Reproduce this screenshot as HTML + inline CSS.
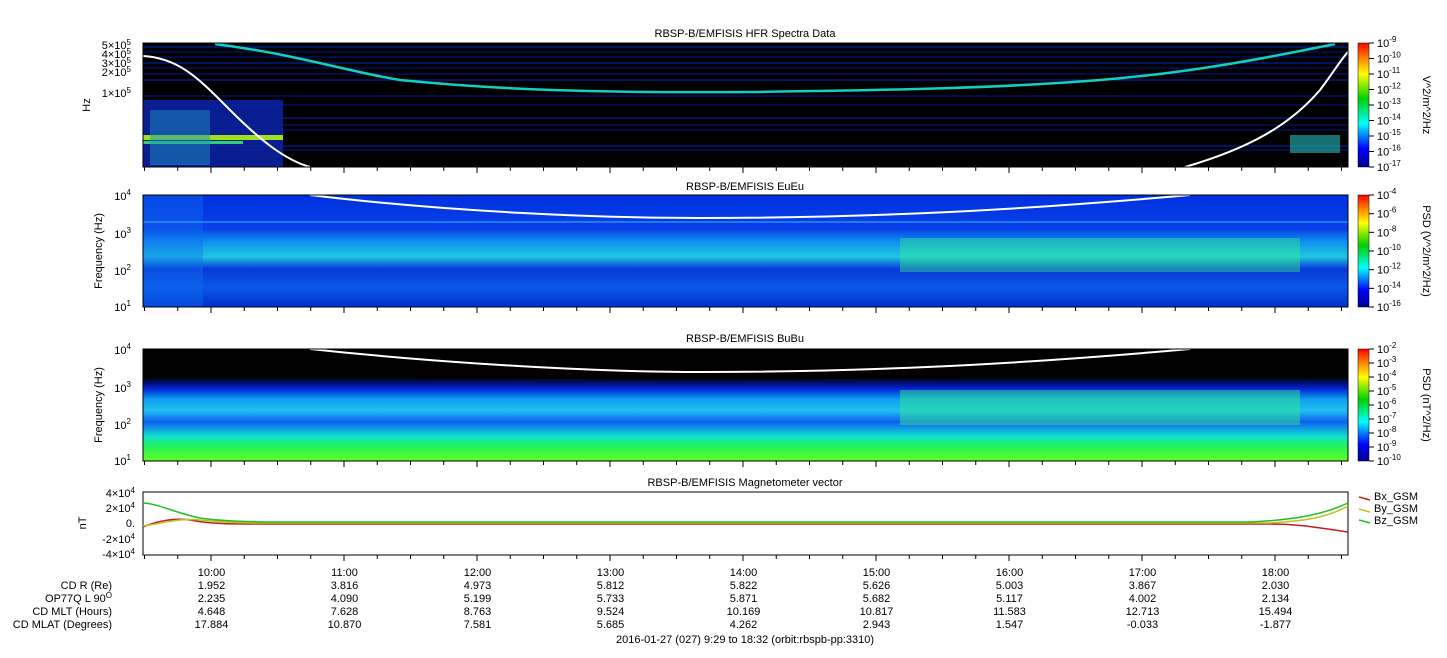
<!DOCTYPE html>
<html><head><meta charset="utf-8"><style>
html,body{margin:0;padding:0;background:#fff;width:1447px;height:658px;overflow:hidden}
svg{display:block;font-family:"Liberation Sans",sans-serif}
text{fill:#000;font-size:11px}
</style></head><body>
<svg id="s" width="1447" height="658" viewBox="0 0 1447 658">
<defs>
<linearGradient id="cb" x1="0" y1="1" x2="0" y2="0">
<stop offset="0" stop-color="#00008c"/><stop offset="0.15" stop-color="#0000ff"/><stop offset="0.35" stop-color="#00ffff"/><stop offset="0.55" stop-color="#00d000"/><stop offset="0.75" stop-color="#ffff00"/><stop offset="0.88" stop-color="#ff8000"/><stop offset="1" stop-color="#ff0000"/>
</linearGradient>
<linearGradient id="p2" x1="0" y1="0" x2="0" y2="1">
<stop offset="0" stop-color="#0030e0"/><stop offset="0.3" stop-color="#0840e8"/><stop offset="0.42" stop-color="#1090f0"/><stop offset="0.55" stop-color="#20c8e0"/><stop offset="0.66" stop-color="#0838d8"/><stop offset="0.82" stop-color="#0a58e8"/><stop offset="1" stop-color="#0030d0"/>
</linearGradient>
<linearGradient id="p3" x1="0" y1="0" x2="0" y2="1">
<stop offset="0" stop-color="#000"/><stop offset="0.25" stop-color="#000"/><stop offset="0.35" stop-color="#0020d0"/><stop offset="0.45" stop-color="#10a0f0"/><stop offset="0.55" stop-color="#20c0f0"/><stop offset="0.65" stop-color="#1060f0"/><stop offset="0.78" stop-color="#10e0d0"/><stop offset="0.86" stop-color="#20f060"/><stop offset="1" stop-color="#60ff20"/>
</linearGradient>
</defs>
<!-- Panel 1 -->
<text x="745" y="37" text-anchor="middle">RBSP-B/EMFISIS  HFR Spectra Data</text>
<rect x="143" y="43" width="1205" height="124" fill="#000"/>
<g id="p1lines"></g>
<rect x="143" y="100" width="140" height="67" fill="#0a20a0" opacity="0.9"/>
<rect x="143" y="135" width="140" height="5" fill="#a0e020"/>
<rect x="143" y="141" width="100" height="3" fill="#30d070"/>
<rect x="150" y="110" width="60" height="55" fill="#2090c0" opacity="0.5"/>
<rect x="1290" y="135" width="50" height="18" fill="#20a0a0" opacity="0.7"/>
<path d="M215,44 C300,55 340,70 400,80 C500,90 600,93 750,92 C900,90 1000,88 1100,80 C1200,72 1280,55 1335,44" stroke="#10d0c0" stroke-width="2.5" fill="none"/>
<path d="M143,56 C180,58 200,80 230,110 C260,140 285,160 310,167" stroke="#fff" stroke-width="2" fill="none"/>
<path d="M1185,167 C1250,148 1290,125 1320,90 C1335,70 1342,58 1348,52" stroke="#fff" stroke-width="2" fill="none"/>
<rect x="143" y="43" width="1205" height="124" fill="none" stroke="#000"/>
<text x="131" y="49" text-anchor="end" font-size="10">5×10<tspan dy="-4" font-size="8">5</tspan></text>
<text x="131" y="58" text-anchor="end" font-size="10">4×10<tspan dy="-4" font-size="8">5</tspan></text>
<text x="131" y="67" text-anchor="end" font-size="10">3×10<tspan dy="-4" font-size="8">5</tspan></text>
<text x="131" y="76" text-anchor="end" font-size="10">2×10<tspan dy="-4" font-size="8">5</tspan></text>
<text x="131" y="97" text-anchor="end" font-size="10">1×10<tspan dy="-4" font-size="8">5</tspan></text>
<text transform="translate(90,105) rotate(-90)" text-anchor="middle">Hz</text>
<rect x="1358" y="43" width="11" height="124" fill="url(#cb)" stroke="#000" stroke-width="0.5"/>
<text transform="translate(1423,105) rotate(90)" text-anchor="middle">V^2/m^2/Hz</text>
<!-- Panel 2 -->
<text x="745" y="190" text-anchor="middle">RBSP-B/EMFISIS  EuEu</text>
<rect x="143" y="195" width="1205" height="112" fill="url(#p2)"/>
<rect x="900" y="238" width="400" height="34" fill="#30e890" opacity="0.45"/>
<rect x="143" y="195" width="60" height="112" fill="#1070f0" opacity="0.4"/>
<line x1="143" y1="222" x2="1348" y2="222" stroke="#30a0f0" stroke-width="1.2"/>
<path d="M310,195 C450,212 600,218 700,218 C850,218 1000,212 1190,195" stroke="#fff" stroke-width="2" fill="none"/>
<rect x="143" y="195" width="1205" height="112" fill="none" stroke="#000"/>
<text x="131" y="311" text-anchor="end">10<tspan dy="-5" font-size="8">1</tspan></text>
<text x="131" y="275" text-anchor="end">10<tspan dy="-5" font-size="8">2</tspan></text>
<text x="131" y="238" text-anchor="end">10<tspan dy="-5" font-size="8">3</tspan></text>
<text x="131" y="200" text-anchor="end">10<tspan dy="-5" font-size="8">4</tspan></text>
<text transform="translate(102,251) rotate(-90)" text-anchor="middle">Frequency (Hz)</text>
<rect x="1358" y="195" width="11" height="112" fill="url(#cb)" stroke="#000" stroke-width="0.5"/>
<text transform="translate(1423,251) rotate(90)" text-anchor="middle">PSD (V^2/m^2/Hz)</text>
<!-- Panel 3 -->
<text x="745" y="342" text-anchor="middle">RBSP-B/EMFISIS  BuBu</text>
<rect x="143" y="349" width="1205" height="112" fill="url(#p3)"/>
<rect x="900" y="390" width="400" height="35" fill="#30e890" opacity="0.5"/>
<path d="M143,349 L1348,349 L1348,365 C1100,375 800,388 143,372 Z" fill="#000"/>
<path d="M310,349 C450,364 600,372 700,372 C850,372 1000,366 1190,349" stroke="#fff" stroke-width="2" fill="none"/>
<rect x="143" y="349" width="1205" height="112" fill="none" stroke="#000"/>
<text x="131" y="465" text-anchor="end">10<tspan dy="-5" font-size="8">1</tspan></text>
<text x="131" y="429" text-anchor="end">10<tspan dy="-5" font-size="8">2</tspan></text>
<text x="131" y="392" text-anchor="end">10<tspan dy="-5" font-size="8">3</tspan></text>
<text x="131" y="354" text-anchor="end">10<tspan dy="-5" font-size="8">4</tspan></text>
<text transform="translate(102,405) rotate(-90)" text-anchor="middle">Frequency (Hz)</text>
<rect x="1358" y="349" width="11" height="112" fill="url(#cb)" stroke="#000" stroke-width="0.5"/>
<text transform="translate(1423,405) rotate(90)" text-anchor="middle">PSD (nT^2/Hz)</text>
<g id="cbl"></g>
<!-- Panel 4 -->
<text x="745" y="486" text-anchor="middle">RBSP-B/EMFISIS  Magnetometer vector</text>
<rect x="143" y="492" width="1205" height="63" fill="#fff" stroke="#000"/>
<path d="M143,527 C160,520 175,518 190,520 C210,524 230,524 260,524 L1270,524 C1300,524 1320,528 1348,532" stroke="#c02020" stroke-width="1.5" fill="none"/>
<path d="M143,526 C170,522 180,518 200,520 C220,522 240,523 260,523 L1270,523 C1300,521 1325,519 1348,506" stroke="#c0c020" stroke-width="1.5" fill="none"/>
<path d="M143,503 C160,504 175,513 200,518 C220,521 250,522 280,522 L1250,522 C1290,520 1320,516 1348,503" stroke="#20c020" stroke-width="1.5" fill="none"/>
<text x="135" y="497" text-anchor="end" font-size="10">4×10<tspan dy="-4" font-size="8">4</tspan></text>
<text x="135" y="512" text-anchor="end" font-size="10">2×10<tspan dy="-4" font-size="8">4</tspan></text>
<text x="135" y="527" text-anchor="end" font-size="10">0.</text>
<text x="135" y="543" text-anchor="end" font-size="10">-2×10<tspan dy="-4" font-size="8">4</tspan></text>
<text x="135" y="558" text-anchor="end" font-size="10">-4×10<tspan dy="-4" font-size="8">4</tspan></text>
<text transform="translate(86,523) rotate(-90)" text-anchor="middle">nT</text>
<line x1="1359" y1="497" x2="1370" y2="500" stroke="#c02020" stroke-width="1.5"/>
<line x1="1359" y1="509" x2="1370" y2="512" stroke="#c0c020" stroke-width="1.5"/>
<line x1="1359" y1="520" x2="1370" y2="523" stroke="#20c020" stroke-width="1.5"/>
<text x="1374" y="500">Bx_GSM</text>
<text x="1374" y="512">By_GSM</text>
<text x="1374" y="524">Bz_GSM</text>
<g id="ticks" stroke="#000"></g>
<g id="labels"></g>
<text x="112" y="589" text-anchor="end">CD R (Re)</text>
<text x="112" y="602" text-anchor="end">OP77Q L 90<tspan dy="-4" font-size="8">O</tspan></text>
<text x="112" y="615" text-anchor="end">CD MLT (Hours)</text>
<text x="112" y="628" text-anchor="end">CD MLAT (Degrees)</text>
<text x="745" y="643" text-anchor="middle">2016-01-27 (027) 9:29 to 18:32 (orbit:rbspb-pp:3310)</text>
</svg>
<script>
var ns="http://www.w3.org/2000/svg",s=document.getElementById('s');
function el(t,a,p){var e=document.createElementNS(ns,t);for(var k in a)e.setAttribute(k,a[k]);(p||s).appendChild(e);return e;}
var g=document.getElementById('p1lines');
var ys=[47,52,57,63,68,74,80,96,105,118,125,130,146,150];
ys.forEach(function(y,i){el('line',{x1:143,x2:1348,y1:y,y2:y,stroke:i%3?'#001690':'#0028c0','stroke-width':1},g);});
var c=document.getElementById('cbl');
function cbar(top,bot,exps){var n=exps.length;exps.forEach(function(e,i){var y=top+(bot-top)*i/(n-1);
el('line',{x1:1369,x2:1374,y1:y,y2:y,stroke:'#000'},c);
var t=el('text',{x:1377,y:y+4,'font-size':'11'},c);t.textContent='10';var sp=el('tspan',{dy:'-5','font-size':'8'},t);sp.textContent=e;});}
cbar(43,167,['-9','-10','-11','-12','-13','-14','-15','-16','-17']);
cbar(195,307,['-4','-6','-8','-10','-12','-14','-16']);
cbar(349,461,['-2','-3','-4','-5','-6','-7','-8','-9','-10']);
var tg=document.getElementById('ticks');
var bots=[167,307,461,555];
for(var i=0;i<37;i++){var x=144.5+i*33.25;var maj=((i-2)%4==0);
bots.forEach(function(b){el('line',{x1:x,x2:x,y1:b,y2:b+(maj?6:4)},tg);});}
var lb=document.getElementById('labels');
var T=['10:00','11:00','12:00','13:00','14:00','15:00','16:00','17:00','18:00'];
var R=[['1.952','2.235','4.648','17.884'],['3.816','4.090','7.628','10.870'],['4.973','5.199','8.763','7.581'],['5.812','5.733','9.524','5.685'],['5.822','5.871','10.169','4.262'],['5.626','5.682','10.817','2.943'],['5.003','5.117','11.583','1.547'],['3.867','4.002','12.713','-0.033'],['2.030','2.134','15.494','-1.877']];
T.forEach(function(t,i){var x=211.5+i*133;var e=el('text',{x:x,y:576,'text-anchor':'middle'},lb);e.textContent=t;
R[i].forEach(function(v,j){var e2=el('text',{x:x,y:589+13*j,'text-anchor':'middle'},lb);e2.textContent=v;});});
</script>
</body></html>
